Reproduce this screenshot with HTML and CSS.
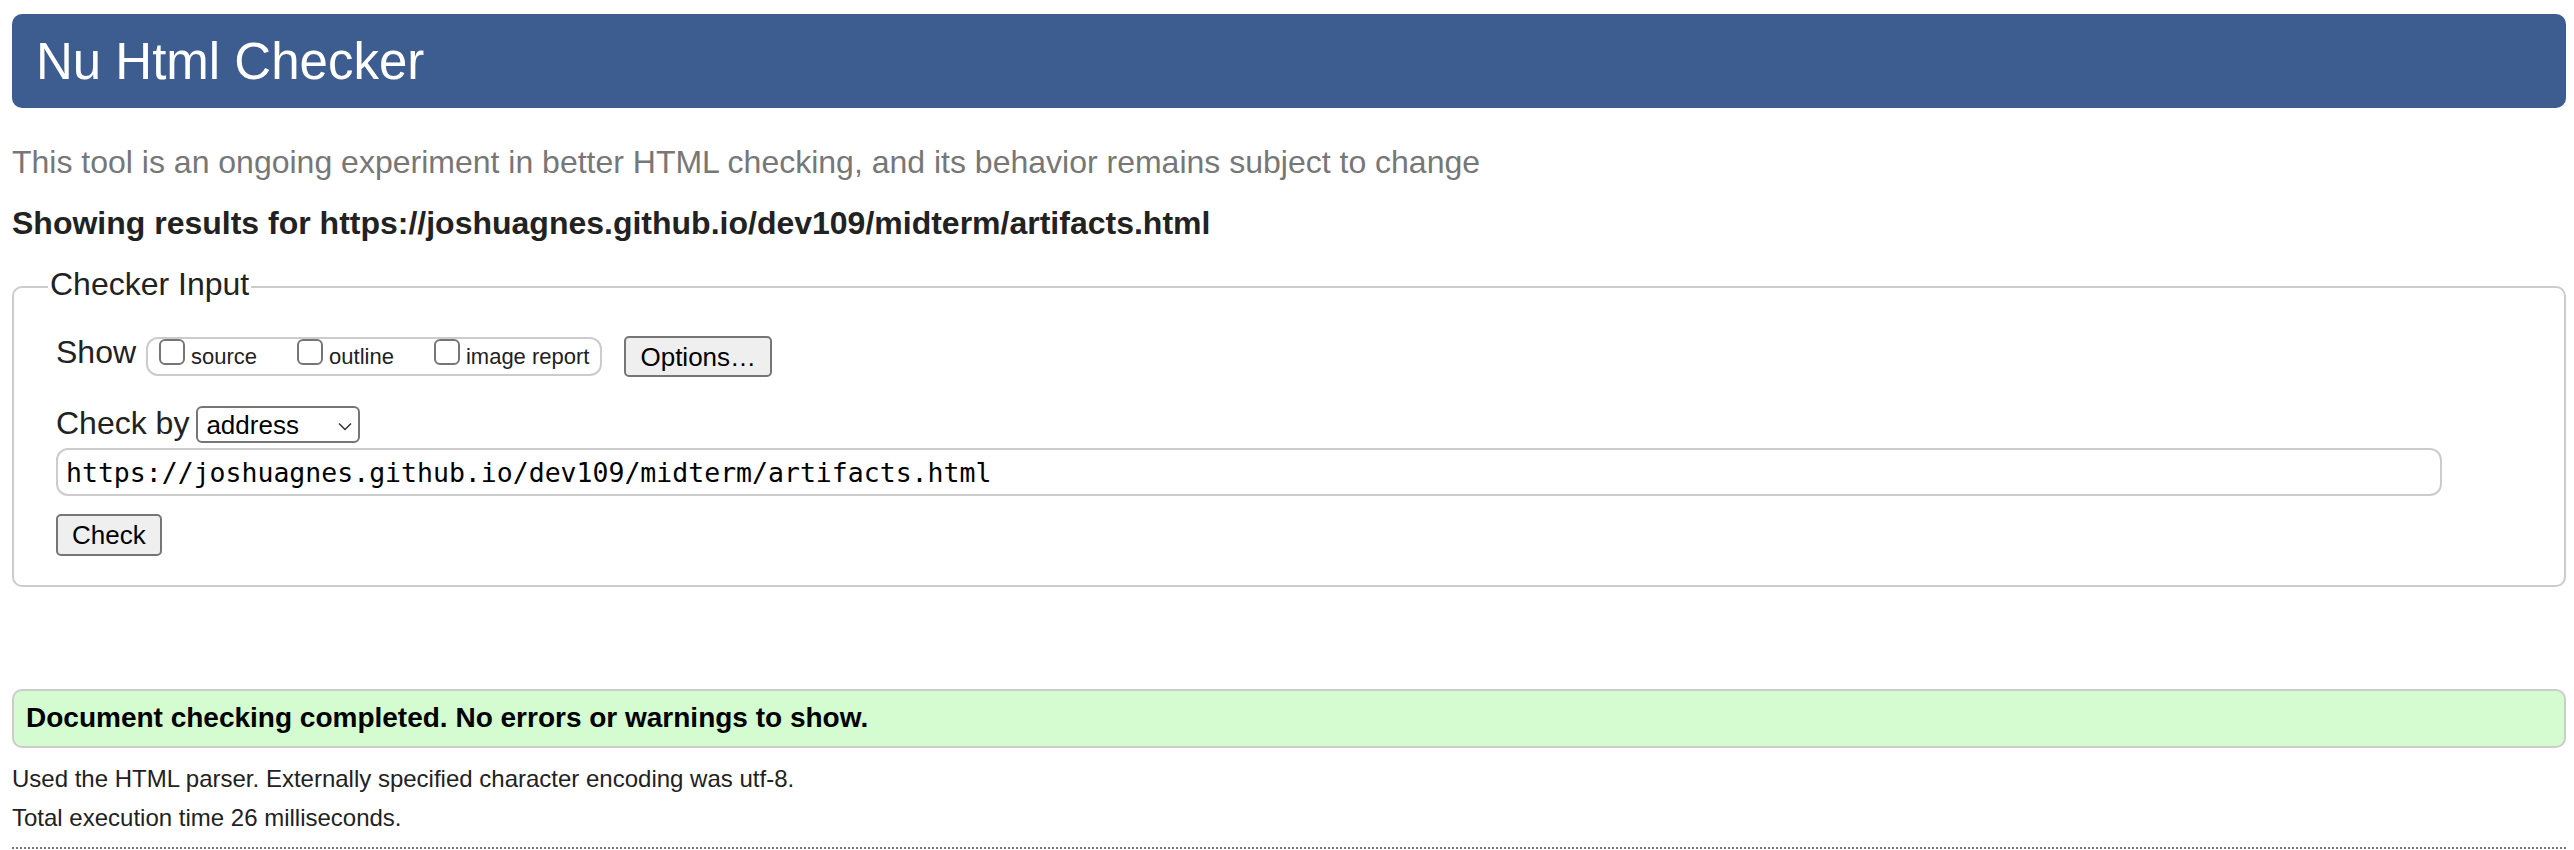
FILE: index.html
```html
<!DOCTYPE html>
<html lang="en">
<head>
<meta charset="utf-8">
<title>Nu Html Checker</title>
<link rel="stylesheet" href="styles.css">
</head>
<body>
<h1 class="title">Nu Html Checker</h1>
<p class="about">This tool is an ongoing experiment in better HTML checking, and its behavior remains subject to change</p>
<h2 class="results-for">Showing results for https://joshuagnes.github.io/dev109/midterm/artifacts.html</h2>
<form class="checker">
  <fieldset class="checker-input">
    <legend class="checker-legend">Checker Input</legend>
    <div class="row show-row">
      <span class="row-label">Show</span>
      <span class="show-group">
        <label class="opt"><input type="checkbox" class="cb"><span class="opt-text">source</span></label>
        <label class="opt"><input type="checkbox" class="cb"><span class="opt-text">outline</span></label>
        <label class="opt"><input type="checkbox" class="cb"><span class="opt-text">image report</span></label>
      </span>
      <button type="button" class="btn btn-options">Options…</button>
    </div>
    <div class="row by-row">
      <span class="row-label">Check by</span>
      <span class="select-wrap">
        <select class="select"><option>address</option></select>
        <svg class="chev" width="14" height="9" viewBox="0 0 14 9"><polyline points="1,1.5 7,7.5 13,1.5" fill="none" stroke="#333" stroke-width="1.5"/></svg>
      </span>
    </div>
    <input class="url" type="text" value="https://joshuagnes.github.io/dev109/midterm/artifacts.html">
    <button type="button" class="btn btn-check">Check</button>
  </fieldset>
</form>
<p class="success">Document checking completed. No errors or warnings to show.</p>
<p class="meta meta-used">Used the HTML parser. Externally specified character encoding was utf-8.</p>
<p class="meta meta-time">Total execution time 26 milliseconds.</p>
<hr class="sep">
</body>
</html>
```
FILE: styles.css
```css
html {
  margin: 0;
  padding: 0;
  background: #fff;
}

body {
  margin: 14px 8px 0 12px;
  font-family: "Liberation Sans", Arial, sans-serif;
  color: #222;
  background: #fff;
}

.title {
  margin: 0;
  padding: 19px 24px 17px;
  font-size: 51px;
  line-height: 58px;
  font-weight: normal;
  color: #fff;
  background: #3d5c90;
  border-radius: 10px;
}

.about {
  margin: 36px 0 0;
  font-size: 32px;
  line-height: 37px;
  color: #777;
}

.results-for {
  margin: 24px 0 0;
  font-size: 32px;
  line-height: 37px;
  font-weight: bold;
  color: #222;
}

.checker {
  margin: 24px 0 0;
}

.checker-input {
  margin: 0;
  min-width: 0;
  padding: 27px 42px 29px 42px;
  border: 2px solid #ccc;
  border-radius: 10px;
}

.checker-legend {
  margin-left: -8px;
  padding: 0 2px 4px;
  font-size: 32px;
  line-height: 37px;
  color: #222;
}

.row {
  display: flex;
  align-items: flex-start;
}

.row-label {
  font-size: 32px;
  line-height: 37px;
  color: #222;
}

.show-group {
  display: flex;
  align-items: flex-start;
  gap: 40px;
  box-sizing: border-box;
  height: 39px;
  margin: 3px 0 0 10px;
  padding: 0 11px;
  border: 2px solid #ccc;
  border-radius: 12px;
}

.opt {
  display: flex;
  align-items: flex-start;
  font-size: 22px;
  line-height: 26px;
  color: #222;
}

.cb {
  -webkit-appearance: none;
  appearance: none;
  box-sizing: border-box;
  width: 26px;
  height: 26px;
  margin: 0;
  border: 2px solid #767676;
  border-radius: 6px;
  background: #fff;
}

.opt-text {
  margin: 5px 0 0 6px;
}

.btn {
  display: block;
  box-sizing: border-box;
  padding: 0 14px;
  font-family: "Liberation Sans", Arial, sans-serif;
  font-size: 26px;
  line-height: 30px;
  color: #000;
  background: #efefef;
  border: 2px solid #767676;
  border-radius: 5px;
}

.btn-options {
  height: 41px;
  margin: 2px 0 0 22px;
}

.by-row {
  margin-top: 28px;
}

.select-wrap {
  position: relative;
  display: block;
  margin: 1px 0 0 7px;
}

.select {
  -webkit-appearance: none;
  appearance: none;
  display: block;
  box-sizing: border-box;
  width: 164px;
  height: 37px;
  margin: 0;
  padding: 0 30px 0 8px;
  font-family: "Liberation Sans", Arial, sans-serif;
  font-size: 26px;
  color: #000;
  background: #fff;
  border: 2px solid #767676;
  border-radius: 6px;
}

.chev {
  position: absolute;
  right: 8px;
  top: 16px;
  pointer-events: none;
}

.url {
  display: block;
  box-sizing: border-box;
  width: calc(100% - 80px);
  height: 48px;
  margin: 5px 0 0;
  padding: 0 8px;
  font-family: "DejaVu Sans Mono", "Liberation Mono", monospace;
  font-size: 26.5px;
  color: #000;
  background: #fff;
  border: 2px solid #ccc;
  border-radius: 12px;
}

.btn-check {
  height: 42px;
  margin-top: 18px;
}

.success {
  margin: 102px 0 0;
  padding: 11px 12px 12px;
  font-size: 28px;
  line-height: 32px;
  font-weight: bold;
  color: #000;
  background: #d5fbd0;
  border: 2px solid #ccc;
  border-radius: 10px;
}

.meta {
  margin: 0;
  font-size: 24px;
  line-height: 28px;
  color: #222;
}

.meta-used {
  margin-top: 17px;
}

.meta-time {
  margin-top: 11px;
}

.sep {
  height: 0;
  margin: 15px 0 0;
  border: 0;
  border-top: 2px dotted #777;
}
```
